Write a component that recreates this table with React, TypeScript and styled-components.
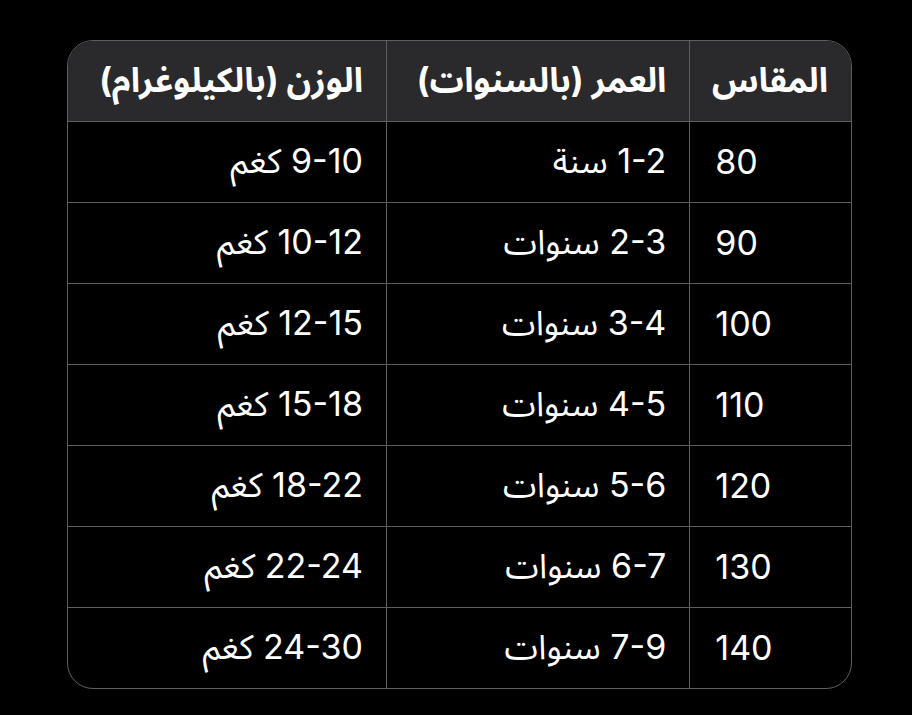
import styled, { createGlobalStyle } from 'styled-components';

const GlobalStyle = createGlobalStyle`
  html, body {
    margin: 0;
    background: #000;
  }
  body {
    font-family: Inter, "Noto Sans Arabic", "DejaVu Sans", sans-serif;
    color: #fff;
  }
`;

type SizeRow = {
  size: string;
  age: string;
  weight: string;
};

const rows: SizeRow[] = [
  { size: '80', age: '1-2 سنة', weight: '9-10 كغم' },
  { size: '90', age: '2-3 سنوات', weight: '10-12 كغم' },
  { size: '100', age: '3-4 سنوات', weight: '12-15 كغم' },
  { size: '110', age: '4-5 سنوات', weight: '15-18 كغم' },
  { size: '120', age: '5-6 سنوات', weight: '18-22 كغم' },
  { size: '130', age: '6-7 سنوات', weight: '22-24 كغم' },
  { size: '140', age: '7-9 سنوات', weight: '24-30 كغم' },
];

export default function App() {
  return (
    <>
      <GlobalStyle />
      <Page>
        <Frame>
          <Table dir="rtl">
            <colgroup>
              <col style={{ width: 161 }} />
              <col style={{ width: 303 }} />
              <col style={{ width: 318 }} />
            </colgroup>
            <thead>
              <tr>
                <HeadCell dir="auto">المقاس</HeadCell>
                <HeadCell dir="auto">العمر (بالسنوات)</HeadCell>
                <HeadCell dir="auto">الوزن (بالكيلوغرام)</HeadCell>
              </tr>
            </thead>
            <tbody>
              {rows.map((r) => (
                <tr key={r.size}>
                  <Cell dir="auto">{r.size}</Cell>
                  <Cell dir="auto">{r.age}</Cell>
                  <Cell dir="auto">{r.weight}</Cell>
                </tr>
              ))}
            </tbody>
          </Table>
        </Frame>
      </Page>
    </>
  );
}

const Page = styled.main`
  padding: 40px 0 0 67px;
  min-height: 715px;
  box-sizing: border-box;
`;

const Frame = styled.div`
  width: 785px;
  border: 1px solid #5e5e60;
  border-radius: 26px;
  overflow: hidden;
  box-sizing: border-box;
`;

const Table = styled.table`
  width: 100%;
  border-collapse: collapse;
  table-layout: fixed;

  tr + tr td,
  tbody tr:first-child td {
    border-top: 1px solid #5e5e60;
  }
  td + td,
  th + th {
    border-right: 1px solid #5e5e60;
  }
`;

const HeadCell = styled.th`
  height: 80px;
  padding: 0 23px 0 25px;
  background: #2a2a2c;
  font-size: 34px;
  font-weight: 700;
  text-align: start;
  vertical-align: middle;
  white-space: nowrap;
  box-sizing: border-box;
`;

const Cell = styled.td`
  height: 81px;
  padding: 0 23px 0 25px;
  font-size: 34px;
  font-weight: 400;
  text-align: start;
  vertical-align: middle;
  white-space: nowrap;
  box-sizing: border-box;
`;
